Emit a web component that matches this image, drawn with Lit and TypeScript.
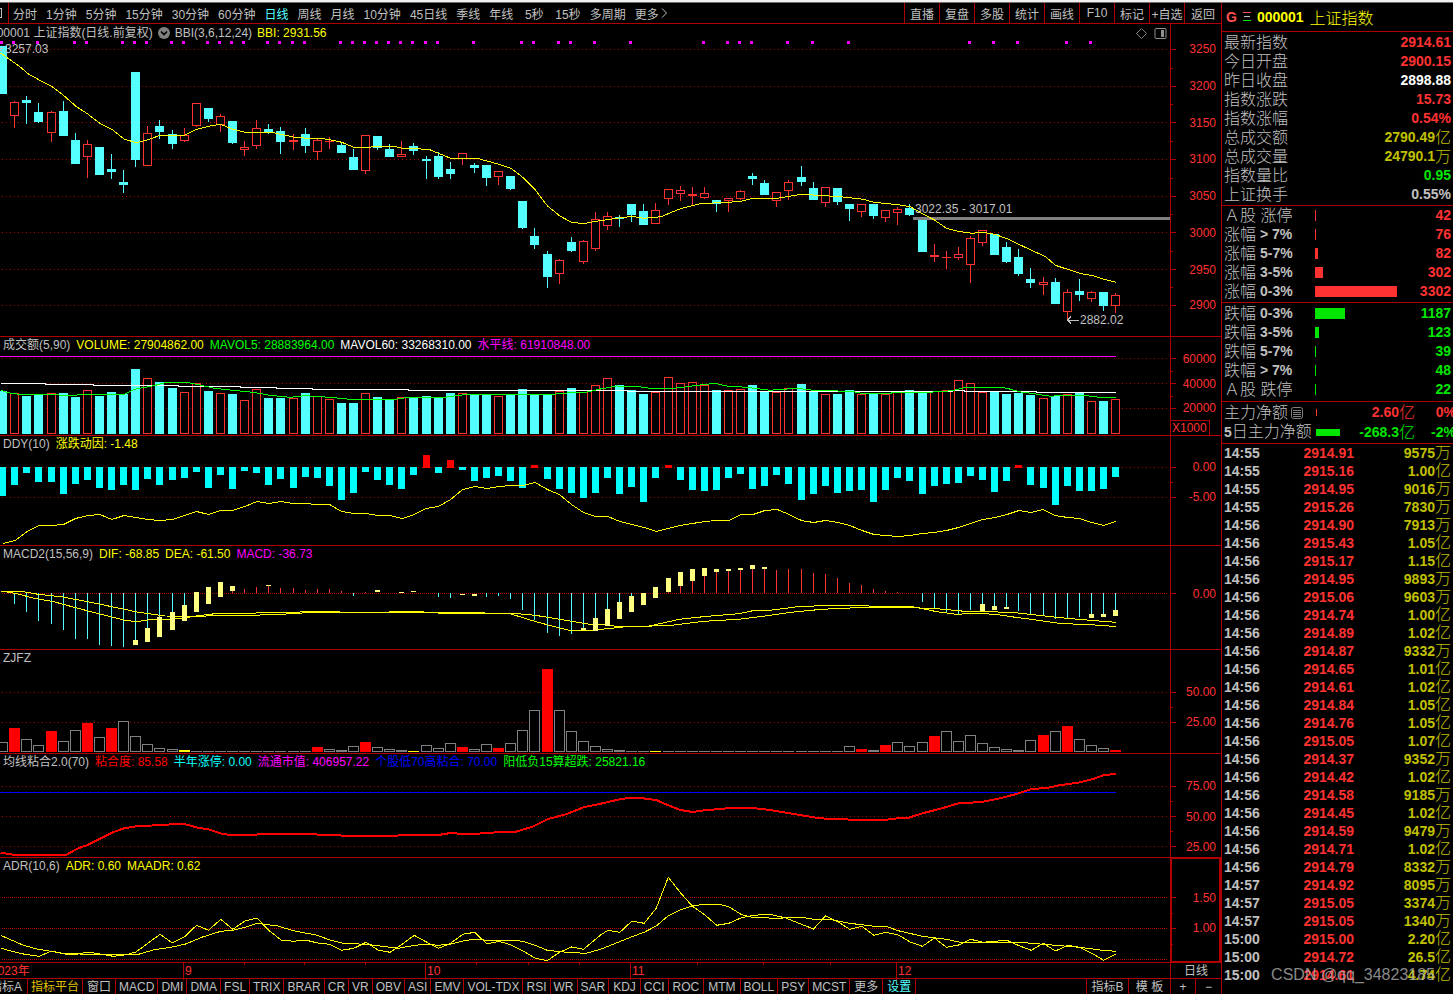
import { LitElement, html, svg, css, nothing, TemplateResult } from "lit";
import { customElement, property, state } from "lit/decorators.js";
import { classMap } from "lit/directives/class-map.js";
import { styleMap } from "lit/directives/style-map.js";

type Point = [number, number];
type Candle = [string, number, number, number, number];

interface Note { x: number; y: number; text: string; }
interface Series { text: string; tone: string; }
interface PanelSpec {
  name: string;
  top: number;
  height: number;
  series: Series[];
  grid: number[];
  dense?: boolean;
  labels: [number, string][];
  minor: number[];
  notes?: Note[];
  unit?: string;
  active?: boolean;
  draw: () => TemplateResult[];
}

const PLOT_WIDTH = 1170;
const STEP = 12.097;
const START = 2.68;
const slot = (i: number) => Math.floor(START + STEP * i);

/* kind, high, open/close top, open/close bottom, low */
const candles: Candle[] = [
  ["D", 46, 46, 94, 94], ["U", 101, 102, 116, 128], ["D", 96, 100, 103, 124], ["D", 103, 112, 122, 123],
  ["U", 111, 112, 133, 142], ["D", 101, 111, 136, 136], ["D", 133, 140, 164, 164], ["U", 140, 144, 157, 178],
  ["D", 147, 147, 175, 175], ["D", 154, 169, 172, 179], ["D", 170, 182, 185, 193], ["D", 72, 72, 160, 167],
  ["U", 126, 133, 166, 166], ["D", 120, 126, 132, 139], ["D", 130, 134, 144, 149], ["U", 128, 135, 141, 142],
  ["U", 103, 103, 126, 127], ["D", 108, 108, 119, 122], ["U", 114, 116, 125, 132], ["D", 121, 121, 143, 144],
  ["U", 141, 147, 150, 156], ["U", 120, 128, 146, 149], ["D", 124, 129, 132, 134], ["D", 127, 131, 142, 154],
  ["U", 134, 140, 142, 150], ["D", 128, 134, 146, 153], ["U", 138, 140, 152, 160], ["U", 137, 141, 142, 149],
  ["D", 142, 145, 153, 153], ["D", 149, 157, 170, 170], ["U", 135, 135, 171, 174], ["D", 136, 136, 148, 150],
  ["D", 144, 149, 157, 157], ["U", 141, 154, 157, 157], ["D", 143, 146, 151, 155], ["D", 156, 159, 161, 179],
  ["D", 152, 156, 177, 179], ["D", 162, 169, 174, 179], ["U", 153, 153, 159, 165], ["D", 163, 165, 168, 173],
  ["D", 165, 165, 178, 186], ["U", 171, 171, 177, 185], ["D", 176, 176, 189, 190], ["D", 201, 201, 228, 229],
  ["D", 228, 236, 245, 249], ["D", 251, 254, 277, 288], ["U", 259, 260, 274, 284], ["D", 237, 242, 251, 252],
  ["U", 240, 241, 262, 264], ["U", 212, 219, 249, 251], ["U", 212, 216, 226, 230], ["D", 215, 217, 219, 227],
  ["D", 204, 204, 215, 222], ["D", 204, 211, 225, 225], ["U", 203, 210, 224, 224], ["U", 189, 189, 199, 205],
  ["U", 186, 190, 194, 201], ["U", 187, 194, 196, 206], ["U", 187, 193, 198, 199], ["D", 200, 200, 204, 212],
  ["U", 198, 198, 201, 212], ["U", 190, 191, 199, 200], ["D", 173, 176, 179, 185], ["D", 180, 183, 195, 195],
  ["U", 192, 192, 201, 207], ["U", 180, 182, 191, 200], ["D", 166, 177, 182, 186], ["D", 182, 188, 200, 200],
  ["U", 187, 187, 203, 207], ["D", 188, 188, 202, 205], ["D", 204, 204, 209, 221], ["U", 204, 204, 212, 217],
  ["D", 204, 204, 216, 219], ["U", 210, 210, 218, 222], ["U", 207, 209, 213, 225], ["D", 204, 208, 215, 216],
  ["D", 220, 220, 252, 252], ["U", 244, 255, 257, 262], ["U", 251, 257, 258, 269], ["U", 247, 254, 258, 260],
  ["U", 236, 238, 265, 283], ["U", 230, 230, 243, 246], ["D", 234, 234, 255, 255], ["D", 242, 247, 262, 263],
  ["D", 249, 257, 274, 276], ["D", 268, 279, 283, 288], ["U", 277, 282, 285, 295], ["D", 278, 282, 304, 304],
  ["U", 289, 292, 312, 319], ["D", 279, 291, 295, 301], ["U", 291, 292, 299, 302], ["D", 292, 292, 306, 311],
  ["U", 293, 295, 306, 313],
];

const signals = [0, 1, 3, 6, 7, 10, 11, 12, 14, 15, 17, 18, 19, 20, 22, 23, 24, 25, 28, 29, 30, 31, 32, 33, 34, 35, 36, 39,
  43, 44, 46, 47, 49, 52, 58, 60, 61, 62, 65, 67, 70, 80, 82, 84, 88, 90];

const bbi: Point[] = [[-.2, 53], [1.4, 66.7], [2.1, 74], [3, 80], [4, 86.3], [5, 95.3], [6, 106], [7, 114], [8, 123.3],
  [9, 129.3], [10, 139], [11, 142.7], [12, 139.7], [13, 135.3], [15, 135.3], [16, 129.3], [17, 126.3], [18, 124.3],
  [19, 129.3], [20, 132.3], [22.2, 132.3], [24, 137], [25.1, 138.3], [26.2, 138.3], [27.3, 140.3], [28, 142.3],
  [29, 147.3], [30.2, 147.3], [31.2, 146], [32.3, 146], [33, 148.3], [35.2, 149.3], [37, 158.3], [39.2, 158.3],
  [41, 164.3], [42, 168.3], [43, 177.7], [44, 189.7], [45, 205.7], [46, 215.7], [47, 222.3], [48, 223.7], [49, 221.3],
  [50.5, 218.7], [52, 216.3], [53, 218.3], [54.4, 216.7], [55.2, 212.7], [56, 208.7], [57.8, 203.3], [59.6, 202.7],
  [61, 201.3], [62, 198.3], [64, 198.3], [66, 194.3], [69.2, 196.7], [71.1, 199.3], [72, 202.3], [74, 204.7],
  [75, 206.7], [76.1, 214.3], [77, 220], [78, 228.3], [79, 231.3], [80.1, 233.3], [81, 232.3], [82, 234.3],
  [83, 238.7], [84.1, 245], [85.1, 250.7], [86.2, 256.7], [87, 265.3], [88, 269.3], [89, 273.3], [90.2, 276],
  [91, 279.3], [92, 282.3]];

const volume = [391, 393, 396, 394, 393, 393, 397, 390, 396, 392, 394, 369, 378, 382, 388, 392, 383, 391, 393, 394, 400,
  389, 398, 398, 398, 393, 396, 399, 403, 403, 393, 397, 399, 397, 397, 396, 397, 393, 393, 395, 395, 396, 395, 389, 395,
  395, 391, 388, 392, 385, 378, 385, 390, 394, 392, 377, 383, 382, 385, 390, 390, 389, 385, 392, 392, 388, 384, 392, 394,
  394, 390, 394, 394, 394, 392, 390, 392, 391, 390, 380, 383, 392, 391, 394, 393, 395, 398, 396, 394, 393, 401, 401, 399];

const mavol60: Point[] = [[-.2, 383.5], [3.5, 383.5], [3.5, 384.5], [7.5, 384.5], [7.5, 385.5], [14.5, 385.5],
  [14.5, 386.5], [19.6, 386.5], [19.6, 387.5], [22.6, 387.5], [22.6, 388.5], [25.6, 388.5], [25.6, 389.5], [33.5, 389.5],
  [33.5, 390.5], [51.6, 390.5], [51.6, 391.5], [78.5, 391.5], [78.5, 390.5], [79.5, 390.5], [79.5, 391.5], [85.4, 391.5],
  [85.4, 392.5], [92, 392.5]];

const mavol5: Point[] = [[-.2, 390.5], [.7, 393.3], [1.4, 394.3], [3.7, 394.3], [5.6, 395.7], [6.6, 394.3], [10, 394.3],
  [10.9, 389.3], [12.6, 385.3], [13.4, 382.7], [15.3, 382.7], [16, 384.3], [17.5, 388.3], [19, 390.3], [20.7, 392.3],
  [21.9, 395], [23.7, 397.3], [25, 395.7], [27, 397.3], [28.7, 399.3], [32.4, 399.3], [33.6, 397.3], [36.5, 397.3],
  [38.4, 394.3], [45.4, 394.3], [47.3, 392.3], [48.2, 392.3], [49.4, 389], [50.7, 386], [52.3, 386.3], [53.5, 388.3],
  [55.4, 388.3], [56.4, 387], [57.6, 385], [58.9, 383.3], [59.8, 386], [61.5, 387.3], [63.4, 390.3], [64.4, 389.3],
  [65.7, 388.3], [67, 390.3], [68.5, 390.7], [70.3, 391.7], [71, 393.3], [73.4, 393.3], [73.6, 392.3], [76.5, 392.3],
  [78.5, 390.7], [79.5, 387.7], [80.4, 387.3], [82.4, 387.3], [83, 388.3], [84, 391.7], [85, 393.3], [86.6, 396.3],
  [87.6, 395.3], [89.3, 395.3], [90.6, 397.3], [92, 397.3]];

const ddyZero = 467;
const ddyBars = [496, 485, 473, 482, 482, 494, 484, 480, 488, 490, 485, 490, 479, 485, 480, 478, 472, 488, 475, 489, 471,
  473, 485, 479, 488, 477, 478, 486, 500, 493, 472, 480, 485, 489, 475, 455, 473, 460, 470, 481, 478, 476, 481, 488, 465,
  479, 489, 493, 498, 493, 478, 494, 487, 502, 478, 465, 480, 490, 491, 490, 478, 474, 489, 486, 475, 484, 500, 494, 486,
  493, 491, 490, 502, 490, 478, 481, 494, 486, 484, 483, 476, 480, 492, 481, 465, 485, 488, 505, 486, 491, 491, 489, 477];

const ddyLine = [543, 540, 531, 525, 525, 524, 518, 515, 514, 519, 515, 517, 519, 520, 519, 515, 511, 514, 510, 510, 506,
  501, 503, 501, 503, 503, 504, 504, 511, 513, 513, 515, 515, 518, 514, 508, 506, 499, 489, 486, 488, 486, 485, 485, 482,
  489, 494, 504, 512, 516, 516, 521, 524, 527, 531, 528, 525, 523, 521, 520, 520, 514, 514, 510, 509, 514, 520, 522, 520,
  522, 525, 530, 534, 535, 536, 535, 533, 532, 530, 527, 523, 519, 517, 514, 510, 512, 509, 515, 517, 518, 522, 525, 521];

const macdZero = 593;
const macdSticks: Record<number, number> = {
  1: 604, 2: 612, 3: 621, 4: 624, 5: 630, 6: 639, 7: 639, 8: 645, 9: 646, 10: 647, 11: 640, 12: 628, 13: 617, 14: 612,
  15: 605, 19: 591, 20: 589, 21: 587, 22: 586, 23: 588, 24: 588, 25: 590, 26: 589, 27: 589, 28: 591, 29: 596, 30: 592,
  36: 597, 37: 598, 40: 597, 41: 596, 42: 599, 43: 610, 44: 620, 45: 633, 46: 636, 47: 634, 48: 628, 49: 618, 50: 609,
  51: 602, 52: 596, 55: 592, 56: 586, 57: 581, 58: 576, 59: 572, 60: 571, 61: 570, 62: 569, 63: 569, 64: 570, 65: 569,
  66: 569, 67: 573, 68: 574, 69: 578, 70: 583, 71: 585, 72: 589, 73: 591, 74: 592, 76: 602, 77: 608, 78: 612, 79: 614,
  80: 610, 81: 604, 82: 606, 83: 607, 84: 611, 85: 614, 86: 615, 87: 619, 88: 618, 89: 617, 90: 614, 91: 614, 92: 610,
};
const macdBlocks: [number, number, number][] = [
  [11, 640, 645], [12, 628, 642], [13, 617, 637], [14, 612, 630], [15, 605, 621], [16, 592, 612], [17, 587, 604],
  [18, 582, 597], [19, 586, 591], [22, 585, 586], [31, 590, 592], [33, 592, 593], [34, 591, 592], [38, 594, 595],
  [39, 594, 596], [48, 628, 630], [49, 618, 631], [50, 609, 626], [51, 602, 619], [52, 596, 612], [53, 593, 605],
  [54, 587, 598], [55, 578, 592], [56, 572, 586], [57, 569, 581], [58, 568, 576], [59, 569, 572], [60, 569, 571],
  [61, 568, 570], [62, 565, 569], [63, 567, 569], [81, 604, 611], [82, 606, 610], [83, 607, 609], [90, 614, 618],
  [91, 614, 617], [92, 610, 616],
];
const dif: Point[] = [[-.2, 591], [1, 593.3], [2.5, 598], [4.2, 601.7], [6.1, 608], [8, 614], [10, 620], [11, 621.7],
  [12, 620], [14, 619], [15, 618], [16, 616], [18, 613], [20, 614], [21.6, 612.3], [23.5, 612.3], [27, 611.3],
  [29, 613], [34, 611.3], [36, 613], [39.6, 613], [42, 614], [44, 621.5], [46, 628], [47, 630.7], [48.2, 630.7],
  [49.4, 629.3], [51.3, 627], [53.3, 626.3], [54.3, 623.7], [55.9, 619.3], [58.2, 616.3], [60.8, 613.7], [62, 610.7],
  [63.4, 610.3], [65.7, 606.7], [67.7, 605.7], [71.4, 605.7], [72, 606.7], [75.2, 606.7], [77.2, 611.7], [78.8, 614.3],
  [80.4, 613.3], [82, 614.3], [83.7, 617.3], [85.6, 620.3], [87.3, 623.3], [88.9, 624.3], [90.9, 625.3], [92, 626.7]];
const dea: Point[] = [[-.2, 591], [1.7, 591.7], [2.9, 594.3], [4.8, 596.7], [6.7, 601], [9, 606.7], [11.2, 612.3],
  [13.4, 616], [16.2, 616.3], [18.1, 615.3], [20.4, 615.3], [23.2, 614.3], [23.8, 613.3], [27, 612.3], [34, 612.3],
  [42.2, 613.3], [44, 615.3], [46, 619.3], [48.5, 624.3], [49.4, 624.3], [50.7, 626.3], [53, 626.3], [55.3, 625.3],
  [57.9, 621.3], [60.8, 619.3], [62.8, 616.3], [65.1, 612.3], [67.7, 609.3], [70.6, 607.7], [75.2, 607.7],
  [77.2, 608.7], [79.5, 611.3], [83.4, 612.3], [85.6, 615.3], [87.9, 618.3], [89.9, 620.3], [92, 622.3]];

const zjfz = [742, 728, 739, 745, 731, 741, 730, 723, 737, 728, 721, 736, 744, 748, 749, 750, 751, 751, 751, 751, 751, 751,
  751, 751, 751, 751, 747, 749, 750, 746, 742, 747, 749, 750, 751, 745, 748, 743, 747, 749, 744, 748, 743, 730, 710, 669,
  710, 731, 741, 746, 749, 750, 751, 751, 751, 751, 751, 751, 751, 751, 751, 751, 751, 751, 751, 751, 751, 751, 751, 751,
  746, 749, 750, 745, 742, 746, 742, 736, 731, 741, 735, 743, 747, 749, 750, 740, 735, 731, 726, 739, 745, 748, 750];
const zjfzHot = new Set([1, 4, 7, 9, 26, 30, 38, 41, 45, 71, 73, 77, 86, 88, 92]);
const zjfzLow = new Set([15, 34, 54]);

const cohesion: Point[] = [[-.2, 852.7], [1, 855], [5.2, 855], [6.1, 849], [7.1, 844.3], [9, 832.7], [10, 828.3],
  [11.2, 826], [13.4, 825], [14, 824], [15.1, 824.3], [16.1, 827.7], [17, 829.3], [18.1, 833.7], [18.8, 835],
  [20.7, 835], [21.3, 834], [24.9, 834], [27, 835], [28.9, 836], [32, 836], [33.3, 835], [36, 835], [37, 833],
  [38, 834], [40, 833.3], [41, 832], [42.3, 832], [43.8, 826.7], [45, 819.3], [46.6, 814], [48, 807.3], [49.4, 803.7],
  [51.2, 798.7], [52.5, 797.7], [54, 800], [55, 805.3], [56, 810], [57, 812], [58, 810.3], [60.2, 808], [62, 808],
  [63.4, 810], [65.4, 814], [67, 817.3], [68.2, 819], [69.6, 819], [70.1, 820], [72.9, 820], [73.6, 818.7],
  [74.9, 817.7], [76, 813.3], [77.5, 808.7], [79, 803.3], [80.9, 802], [82.4, 798.3], [84, 793.3], [85, 789],
  [86.3, 788], [87.3, 785.3], [88.9, 782.7], [90.2, 778.7], [91, 775], [92, 774]];

const adr: Point[] = [[-.2, 947.7], [.3, 950], [1.7, 954], [3, 956.3], [4, 951], [5.2, 954.3], [6.1, 954.3], [7, 952],
  [8.2, 954.3], [9.1, 956.3], [10.2, 954.7], [11, 952], [12, 943], [13, 934.3], [14, 943], [15, 937], [16, 925.3],
  [17, 930.3], [18, 919.3], [19, 929.3], [20, 921], [21, 918], [22, 930.7], [23, 940], [24, 941.3], [25, 940],
  [26, 943], [27, 944.3], [28, 950.3], [29, 948.3], [30, 942.3], [31, 950], [32, 952.3], [33, 944.3], [34, 935.3],
  [35, 942], [36, 948.3], [37, 943.3], [38, 934.3], [39, 932.3], [40, 944], [41, 941.3], [42, 945], [43, 951],
  [44, 958.3], [45, 960.7], [46, 952.3], [47, 947], [48, 949.3], [49.4, 935], [50, 930.3], [51, 932.3], [52, 921],
  [53, 923.3], [54, 908.3], [55, 877.3], [56, 892.7], [57, 906.3], [58, 914.7], [59, 925.3], [60, 923.3], [61, 918],
  [62, 915.3], [63.4, 914.3], [64.7, 918], [67, 929], [68, 915.7], [69, 921.7], [70, 929.3], [71, 926.3], [72, 935.3],
  [73, 932.3], [74, 935], [75, 942], [76, 946.3], [77, 938], [78, 947.3], [79, 945], [80, 939.3], [81, 942.3],
  [83, 940.3], [84, 945.7], [85, 950.3], [86, 943.3], [87, 951], [88, 945.3], [89, 947.3], [90, 953.3], [91, 960.3],
  [92, 954]];
const maadr: Point[] = [[-.2, 935.3], [1.7, 945.3], [2.8, 949], [4.8, 953], [7.4, 954.7], [11.2, 954.3], [12.4, 950],
  [14, 947], [15.1, 944], [16.5, 937], [18, 931.3], [19.1, 930], [20.2, 926.7], [21, 923.3], [22.7, 926], [24, 930.7],
  [26, 935.3], [27, 940], [28.1, 943.3], [30, 944.3], [32.7, 948.3], [34, 945.3], [35, 944.3], [36, 945.3], [37, 944],
  [38, 941], [39, 939], [40, 940.3], [42, 940.3], [43, 941.3], [44, 945.3], [45, 950.3], [46.6, 952.3], [48.2, 953.3],
  [49.4, 949.3], [52, 936.7], [53, 932.3], [54, 926], [55, 915.7], [56, 909.7], [57, 906], [57.7, 904.7],
  [59.2, 904.3], [60, 906.7], [61, 914.3], [61.8, 917], [63.8, 918.3], [66, 917.3], [67, 919.3], [68.3, 919.3],
  [70, 923.3], [72, 926.3], [73, 926.3], [74, 930.7], [76, 936.3], [78, 939.3], [79.1, 942.3], [84, 942.3],
  [86, 944.3], [89, 947.3], [90.9, 950.3], [92, 951.3]];

const lineOf = (points: Point[], tone: string, width = 1) => svg`<polyline class=${"line " + tone} stroke-width=${width}
  points=${points.map(([i, y]) => `${(START + 0.3 + STEP * i).toFixed(1)},${y}`).join(" ")}></polyline>`;

const block = (x: number, y: number, w: number, h: number, tone: string) =>
  svg`<rect class=${"fill " + tone} x=${x} y=${y} width=${w} height=${h}></rect>`;

const hollow = (x: number, y: number, w: number, h: number, tone: string) =>
  svg`<rect class=${"hollow " + tone} x=${x + 0.5} y=${y + 0.5} width=${w - 1} height=${Math.max(h - 1, 0.1)}></rect>`;

const drawCandles = () => candles.map(([kind, high, top, bottom, low], i) => {
  const x = slot(i);
  const tone = kind === "U" ? "rise" : "fall";
  const body = kind === "D" || bottom - top < 3
    ? block(x - 4, top, 9, bottom - top, tone)
    : hollow(x - 4, top, 9, bottom - top, tone);
  return svg`${high < top ? block(x, high, 1, top - high, tone) : nothing}
    ${low > bottom ? block(x, bottom, 1, low - bottom, tone) : nothing}${body}`;
});

const panels: PanelSpec[] = [
  {
    name: "000001 上证指数(日线.前复权)", top: 24, height: 312,
    series: [{ text: "BBI(3,6,12,24)", tone: "plain" }, { text: "BBI: 2931.56", tone: "yellow" }],
    grid: [49, 86, 122, 159, 196, 232, 269, 305],
    labels: [[49, "3250"], [86, "3200"], [122, "3150"], [159, "3100"], [196, "3050"], [232, "3000"], [269, "2950"], [305, "2900"]],
    minor: [68, 104, 141, 178, 214, 251, 287],
    notes: [{ x: 5, y: 49, text: "3257.03" }, { x: 915, y: 209, text: "3022.35 - 3017.01" }, { x: 1080, y: 320, text: "2882.02" }],
    draw: () => [
      ...signals.map((i) => block(slot(i) - 2, 41, 3, 3, "magenta")),
      svg`${drawCandles()}`,
      block(913, 217, 257, 3, "grey"),
      lineOf(bbi, "yellow"),
      svg`<path class="line plain" d="M1067 320.5H1079M1071 316.5L1067.5 320L1071 323.5"></path>`,
      svg`<path class="line plain" d="M-1 48.5H3M0 50.5H2"></path>`,
    ],
  },
  {
    name: "成交额(5,90)", top: 337, height: 98,
    series: [{ text: "VOLUME: 27904862.00", tone: "yellow" }, { text: "MAVOL5: 28883964.00", tone: "green" },
      { text: "MAVOL60: 33268310.00", tone: "white" }, { text: "水平线: 61910848.00", tone: "magenta" }],
    grid: [358, 383, 408],
    labels: [[358, "60000"], [383, "40000"], [408, "20000"]], minor: [371, 396], unit: "X1000",
    draw: () => [
      ...volume.map((y, i) => candles[i][0] === "D"
        ? block(slot(i) - 4, y, 9, 434 - y, "fall") : hollow(slot(i) - 4, y, 9, 434 - y, "rise")),
      lineOf([[-.3, 356.5], [92, 356.5]], "magenta"), lineOf(mavol60, "white"), lineOf(mavol5, "green"),
    ],
  },
  {
    name: "DDY(10)", top: 436, height: 109, series: [{ text: "涨跌动因: -1.48", tone: "yellow" }],
    grid: [467, 497], labels: [[467, "0.00"], [497, "-5.00"]], minor: [482],
    draw: () => [
      ...ddyBars.map((y, i) => y < ddyZero
        ? block(slot(i) - 3, y, 7, ddyZero + 1 - y, "red") : block(slot(i) - 3, ddyZero, 7, y - ddyZero, "aqua")),
      lineOf(ddyLine.map((y, i): Point => [i, y + 0.5]), "yellow"),
    ],
  },
  {
    name: "MACD2(15,56,9)", top: 546, height: 103, dense: true,
    series: [{ text: "DIF: -68.85", tone: "yellow" }, { text: "DEA: -61.50", tone: "yellow" }, { text: "MACD: -36.73", tone: "magenta" }],
    grid: [593], labels: [[593, "0.00"]], minor: [],
    draw: () => [
      ...Object.entries(macdSticks).map(([k, y]) => y > macdZero
        ? block(slot(+k), macdZero, 1, y - macdZero, "fall") : block(slot(+k), y, 1, macdZero - y, "rise")),
      lineOf(dif, "yellow"), lineOf(dea, "yellow"),
      ...macdBlocks.map(([i, a, b]) => block(slot(i) - 2, a, 5, b - a, "cream")),
    ],
  },
  {
    name: "ZJFZ", top: 650, height: 103, series: [], grid: [692, 722],
    labels: [[692, "50.00"], [722, "25.00"]], minor: [707],
    draw: () => zjfz.map((y, i) => {
      const x = slot(i) - 5;
      if (zjfzHot.has(i)) return block(x, y, 11, 752 - y, "red");
      if (zjfzLow.has(i)) return block(x, y, 11, 752 - y, "yellow");
      return y > 749 ? block(x, y, 11, 752 - y, "grey") : hollow(x, y, 11, 752 - y, "grey");
    }),
  },
  {
    name: "均线粘合2.0(70)", top: 754, height: 103,
    series: [{ text: "粘合度: 85.58", tone: "red" }, { text: "半年涨停: 0.00", tone: "aqua" }, { text: "流通市值: 406957.22", tone: "magenta" },
      { text: "个股低70高粘合: 70.00", tone: "blue" }, { text: "阳低负15算超跌: 25821.16", tone: "green" }],
    grid: [786, 816, 846], labels: [[786, "75.00"], [816, "50.00"], [846, "25.00"]], minor: [801, 831],
    draw: () => [lineOf([[-.3, 792.5], [92, 792.5]], "blue"), lineOf(cohesion, "red", 2)],
  },
  {
    name: "ADR(10,6)", top: 858, height: 104, dense: true, active: true,
    series: [{ text: "ADR: 0.60", tone: "yellow" }, { text: "MAADR: 0.62", tone: "yellow" }],
    grid: [897, 928, 959], labels: [[897, "1.50"], [928, "1.00"]], minor: [913, 944],
    draw: () => [lineOf(adr, "yellow"), lineOf(maadr, "yellow")],
  },
];

@customElement("chart-panel")
class ChartPanel extends LitElement {
  @property({ attribute: false }) spec!: PanelSpec;
  @property({ type: Boolean }) main = false;

  static styles = css`
    :host { display: grid; grid-template-columns: minmax(0, 1fr) 51px; min-height: 0; border-bottom: 1px solid #b00000; box-sizing: border-box; }
    .plot, .axis { position: relative; overflow: hidden; }
    .axis { border-left: 1px solid #b00000; }
    .axis.active { overflow: visible; }
    .axis.active::after { content: ""; position: absolute; inset: -1px 0 -1px -1px; border: 2px solid #b00000; }
    .canvas { position: absolute; inset: 0; width: 100%; height: 100%; shape-rendering: crispEdges; }
    .head { position: relative; display: flex; gap: 6px; padding: 0 3px; line-height: 16px; white-space: pre; color: #c0c0c0; }
    .head.main { line-height: 18px; padding-left: 0; gap: 5px; }
    .title { font: inherit; margin: 0; }
    .head.main .title { margin-left: -10px; }
    .chevron { width: 12px; height: 12px; align-self: center; }
    .tools { display: flex; gap: 6px; align-items: center; margin-left: auto; }
    .tools svg { width: 13px; height: 13px; display: block; }
    .note, .tick { position: absolute; line-height: 14px; margin-top: -7px; white-space: pre; color: #c0c0c0; }
    .tick { right: 5px; color: #ff3232; }
    .unit { position: absolute; left: 0; bottom: 0; width: 39px; height: 15px; border: solid #b00000; border-width: 1px 1px 0 0; line-height: 14px; padding-left: 1px; box-sizing: border-box; color: #ff3232; }
    .grid { stroke: #b00000; stroke-dasharray: 1 3; }
    .grid.dense { stroke-dasharray: 1 1; }
    .mark { stroke: #b00000; }
    .line { fill: none; stroke: currentColor; }
    .fill { fill: currentColor; }
    .hollow { fill: #000; stroke: currentColor; }
    .rise { color: #ff3232; }
    .fall { color: #54ffff; }
    .plain { color: #c0c0c0; }
    .yellow { color: #ffff00; }
    .green { color: #00ff00; }
    .white { color: #ffffff; }
    .magenta { color: #ff00ff; }
    .aqua { color: #00ffff; }
    .red { color: #ff0000; }
    .blue { color: #0000ff; }
    .grey { color: #808080; }
    .cream { color: #ffff80; }
  `;

  private place(y: number) {
    return `${(((y + 0.5 - this.spec.top) / this.spec.height) * 100).toFixed(3)}%`;
  }

  render() {
    const s = this.spec;
    return html`
      <section class="plot">
        <svg class="canvas" viewBox="0 ${s.top} ${PLOT_WIDTH} ${s.height}" preserveAspectRatio="none" aria-hidden="true">
          ${s.grid.map((y) => svg`<line class=${s.dense ? "grid dense" : "grid"} x1="2" x2="1168" y1=${y + 0.5} y2=${y + 0.5}></line>`)}
          ${s.draw()}
        </svg>
        <header class=${classMap({ head: true, main: this.main })}>
          <h2 class="title">${s.name}</h2>
          ${this.main ? html`<svg class="chevron" viewBox="0 0 12 12" aria-hidden="true"><circle cx="6" cy="6" r="6" fill="#808080"></circle><path d="M3 4.5L6 7.5L9 4.5" fill="none" stroke="#000" stroke-width="1.6"></path></svg>` : nothing}
          ${s.series.map((v) => html`<span class=${v.tone}>${v.text}</span>`)}
          ${this.main ? html`<span class="tools">
            <svg viewBox="0 0 13 13" aria-hidden="true"><path d="M6.5 1.5L11.5 6.5L6.5 11.5L1.5 6.5Z" fill="none" stroke="#808080"></path></svg>
            <svg viewBox="0 0 13 13" aria-hidden="true"><rect x="1" y="1.5" width="11" height="10" rx="1" fill="none" stroke="#909090"></rect><rect x="7" y="3" width="3" height="7" fill="#909090"></rect></svg>
          </span>` : nothing}
        </header>
        ${(s.notes ?? []).map((n) => html`<span class="note" style=${styleMap({ left: `${(n.x / PLOT_WIDTH) * 100}%`, top: this.place(n.y) })}>${n.text}</span>`)}
      </section>
      <aside class=${classMap({ axis: true, active: !!s.active })}>
        <svg class="canvas" viewBox="0 ${s.top} 50 ${s.height}" preserveAspectRatio="none" aria-hidden="true">
          ${s.labels.map(([y]) => svg`<line class="mark" x1="0" x2="5" y1=${y + 0.5} y2=${y + 0.5}></line>`)}
          ${s.minor.map((y) => svg`<line class="mark" x1="0" x2="2" y1=${y + 0.5} y2=${y + 0.5}></line>`)}
        </svg>
        ${s.labels.map(([y, text]) => html`<span class="tick" style=${styleMap({ top: this.place(y) })}>${text}</span>`)}
        ${s.unit ? html`<span class="unit">${s.unit}</span>` : nothing}
      </aside>`;
  }
}

const summary = [
  ["最新指数", "2914.61", "", "rise"], ["今日开盘", "2900.15", "", "rise"], ["昨日收盘", "2898.88", "", "white"],
  ["指数涨跌", "15.73", "", "rise"], ["指数涨幅", "0.54%", "", "rise"], ["总成交额", "2790.49", "亿", "gold"],
  ["总成交量", "24790.1", "万", "gold"], ["指数量比", "0.95", "", "drop"], ["上证换手", "0.55%", "", "plain"],
];
const gainers: [string, string, number, string][] = [
  ["Ａ股 涨停", "", 1, "42"], ["涨幅", "> 7%", 1, "76"], ["涨幅", "5-7%", 3, "82"], ["涨幅", "3-5%", 8, "302"], ["涨幅", "0-3%", 82, "3302"],
];
const losers: [string, string, number, string][] = [
  ["跌幅", "0-3%", 30, "1187"], ["跌幅", "3-5%", 4, "123"], ["跌幅", "5-7%", 1, "39"], ["跌幅", "> 7%", 1, "48"], ["Ａ股 跌停", "", 1, "22"],
];
const trades = `14:55 2914.91 9575万|14:55 2915.16 1.00亿|14:55 2914.95 9016万|14:55 2915.26 7830万|14:56 2914.90 7913万|14:56 2915.43 1.05亿|14:56 2915.17 1.15亿|14:56 2914.95 9893万|14:56 2915.06 9603万|14:56 2914.74 1.00亿|14:56 2914.89 1.02亿|14:56 2914.87 9332万|14:56 2914.65 1.01亿|14:56 2914.61 1.02亿|14:56 2914.84 1.05亿|14:56 2914.76 1.05亿|14:56 2915.05 1.07亿|14:56 2914.37 9352万|14:56 2914.42 1.02亿|14:56 2914.58 9185万|14:56 2914.45 1.02亿|14:56 2914.59 9479万|14:56 2914.71 1.02亿|14:56 2914.79 8332万|14:57 2914.92 8095万|14:57 2915.05 3374万|14:57 2915.05 1340万|15:00 2915.00 2.20亿|15:00 2914.72 26.5亿|15:00 2914.61 4.74亿`
  .split("|").map((row) => row.split(" "));

@customElement("quote-board")
class QuoteBoard extends LitElement {
  static styles = css`
    :host { display: block; position: relative; border-left: 1px solid #b00000; color: #c0c0c0; font-size: 14px; font-weight: bold; overflow: hidden; }
    .name { display: flex; align-items: center; gap: 6px; height: 28px; padding-left: 4px; border-bottom: 1px solid #b00000; color: #ffff00; }
    .flag { color: #ff5050; }
    .bars { width: 8px; height: 12px; flex: none; }
    .name h1 { margin: 0; font-size: 14px; }
    .cjk { font-size: 16px; font-weight: 300; }
    .list { margin: 0; border-bottom: 1px solid #b00000; }
    .list.top { padding: 1px 0; }
    .list.level { padding-bottom: 1px; }
    .list.losers, .list.flow { padding: 1px 0 2px; }
    .row { display: flex; align-items: center; height: 19px; line-height: 19px; padding: 0 2px; white-space: pre; }
    .level .row { display: grid; grid-template-columns: 91px 1fr auto; }
    .flow .row { display: grid; grid-template-columns: 92px 1fr 38px; padding-right: 0; }
    dt, dd { margin: 0; }
    dt { display: flex; align-items: center; gap: 4px; }
    .flow dt { gap: 3px; white-space: pre; }
    .top dd { margin-left: auto; }
    .bar { height: 11px; background: currentColor; }
    .thin { height: 7px; background: currentColor; }
    .amount { display: flex; align-items: center; }
    .amount .figure { margin-left: auto; }
    .share { text-align: right; margin-right: -3px; }
    .note-icon { width: 12px; height: 12px; }
    .rise { color: #ff3232; }
    .drop { color: #00e600; }
    .gold { color: #c0c000; }
    .white { color: #ffffff; }
    table { width: 100%; border-collapse: collapse; table-layout: fixed; }
    td { padding: 0; height: 18px; line-height: 18px; white-space: nowrap; }
    .time { width: 62px; padding-left: 2px; }
    .price { width: 68px; text-align: right; }
    .lot { text-align: right; padding-right: 2px; }
    .cell { display: flex; align-items: center; justify-content: flex-end; height: 18px; }
    .watermark { position: absolute; right: 18px; bottom: 9px; margin: 0; font-size: 16px; line-height: 20px; font-weight: normal; color: rgba(176, 176, 176, 0.8); }
  `;

  private level(rows: [string, string, number, string][], tone: string, falling = false) {
    return html`<dl class=${classMap({ list: true, level: true, losers: falling })}>${rows.map(([a, b, w, n]) => html`<div class="row">
      <dt><span class="cjk">${a}</span>${b ? html`<span>${b}</span>` : nothing}</dt>
      <dd class=${tone}><div class="bar" style=${styleMap({ width: `${w}px` })}></div></dd>
      <dd class=${tone}>${n}</dd></div>`)}</dl>`;
  }

  render() {
    return html`
      <header class="name"><span class="flag">G</span>
        <svg class="bars" viewBox="0 0 8 12" aria-hidden="true"><path d="M0 1.5H8" stroke="#ff5050"></path><path d="M1 5.5H7" stroke="#c0c0c0"></path><path d="M0 9.5H8" stroke="#00e600"></path></svg>
        <h1>000001</h1><span class="cjk">上证指数</span></header>
      <dl class="list top">${summary.map(([label, value, unit, tone]) => html`<div class="row">
        <dt class="cjk">${label}</dt><dd class=${tone}>${value}</dd>${unit ? html`<span class=${"cjk " + tone}>${unit}</span>` : nothing}</div>`)}</dl>
      ${this.level(gainers, "rise")}
      ${this.level(losers, "drop", true)}
      <dl class="list flow">
        <div class="row"><dt><span class="cjk">主力净额</span>
          <svg class="note-icon" viewBox="0 0 12 12" aria-hidden="true"><rect x=".5" y=".5" width="11" height="11" rx="2" fill="none" stroke="#808080"></rect><path d="M2 3.5H10M2 5.5H10M2 7.5H10M2 9.5H10" stroke="#808080"></path></svg></dt>
          <dd class="amount rise"><div class="thin" style=${styleMap({ width: "1px" })}></div><span class="figure">2.60</span><span class="cjk">亿</span></dd>
          <dd class="share rise">0%</dd></div>
        <div class="row"><dt><span>5<span class="cjk">日主力净额</span></span></dt>
          <dd class="amount drop"><div class="thin" style=${styleMap({ width: "24px" })}></div><span class="figure">-268.3</span><span class="cjk">亿</span></dd>
          <dd class="share drop">-2%</dd></div>
      </dl>
      <table><tbody>${trades.map(([time, price, lot]) => html`<tr>
        <td class="time">${time}</td><td class="price rise">${price}</td>
        <td class="lot gold"><div class="cell">${lot.slice(0, -1)}<span class="cjk">${lot.slice(-1)}</span></div></td></tr>`)}</tbody></table>
      <p class="watermark">CSDN @qq_34823185</p>`;
  }
}

const periods = ["分时", "1分钟", "5分钟", "15分钟", "30分钟", "60分钟", "日线", "周线", "月线", "10分钟", "45日线", "季线", "年线", "5秒", "15秒", "多周期", "更多"];
const actions = ["直播", "复盘", "多股", "统计", "画线", "F10", "标记", "+自选", "返回"];
const indicators = ["指标平台", "窗口", "MACD", "DMI", "DMA", "FSL", "TRIX", "BRAR", "CR", "VR", "OBV", "ASI", "EMV", "VOL-TDX", "RSI",
  "WR", "SAR", "KDJ", "CCI", "ROC", "MTM", "BOLL", "PSY", "MCST", "更多", "设置"];
const roomy = new Set(["窗口", "KDJ", "ROC", "MTM", "更多", "设置"]);
const months: [number, string][] = [[183, "9"], [425, "10"], [630, "11"], [896, "12"]];
const weeks = [244, 304, 365, 476, 528, 579, 697, 763, 830];
const along = (x: number) => `${((x / PLOT_WIDTH) * 100).toFixed(3)}%`;

@customElement("app-root")
class AppRoot extends LitElement {
  @state() private period = "日线";

  static styles = css`
    :host { display: block; background: #000; color: #c0c0c0; font: 12px "Liberation Sans", "Noto Sans CJK SC", sans-serif; overflow: hidden; }
    .frame { display: grid; grid-template-columns: minmax(0, 1fr) 232px; min-height: 100vh; box-sizing: border-box; border-top: 2px solid #f0f0f0; padding-top: 1px; box-shadow: inset 0 1px #707070; }
    .left { display: grid; min-width: 0; grid-template-rows: 21px 313fr 99fr 110fr 104fr 104fr 104fr 105fr 16px 15px; }
    button { appearance: none; background: none; border: 0; margin: 0; padding: 0; color: inherit; font: inherit; white-space: nowrap; cursor: pointer; }
    .top { display: flex; align-items: stretch; border-bottom: 1px solid #b00000; min-width: 0; }
    .stub { width: 8px; border-right: 1px solid #b00000; display: flex; align-items: center; }
    .stub i { width: 2px; height: 10px; border: 1px solid #c0c0c0; border-left: 0; box-sizing: border-box; }
    .periods { display: flex; gap: 9px; padding-left: 4px; flex: 1; min-width: 0; overflow: hidden; }
    .periods button { min-width: 24px; display: flex; align-items: center; justify-content: center; gap: 2px; }
    .periods .on { color: #54ffff; }
    .more { width: 6px; height: 10px; }
    .actions { display: flex; }
    .actions button { width: 35px; border-left: 1px solid #b00000; box-sizing: border-box; }
    .actions button:last-child { width: 37px; }
    .time { display: grid; grid-template-columns: minmax(0, 1fr) 51px; border-bottom: 1px solid #b00000; line-height: 17px; height: 15px; }
    .scale { position: relative; overflow: hidden; color: #ff3232; }
    .year { margin-left: -9px; }
    .month { position: absolute; top: 0; bottom: 0; border-left: 1px solid #b00000; padding-left: 1px; }
    .week { position: absolute; top: 0; width: 1px; height: 2px; background: #b00000; }
    .cycle { border-left: 1px solid #b00000; text-align: center; }
    .tabs { display: flex; overflow: hidden; min-width: 0; }
    .tabs button { flex: none; padding: 1px 3px 0; border-right: 1px solid #b00000; box-sizing: border-box; line-height: 14px; }
    .tabs .roomy { padding: 1px 4px 0; }
    .tabs .first { width: 28px; display: flex; justify-content: flex-end; padding: 1px 5px 0 0; overflow: hidden; }
    .tabs .platform { color: #e0c000; }
    .tabs .setup { color: #54ffff; }
    .tabs .gap { flex: 1; border-right: 1px solid #b00000; }
    .tabs .wide { width: 42px; padding: 1px 0 0; }
    .tabs .key { width: 25px; padding: 0; }
    .tabs .key:last-child { border-right: 0; }
  `;

  render() {
    return html`<div class="frame">
      <main class="left">
        <div class="top">
          <span class="stub"><i></i></span>
          <nav class="periods" aria-label="周期">${periods.map((p) => html`<button class=${classMap({ on: p === this.period })}
            @click=${() => (this.period = p)}>${p}${p === "更多" ? html`<svg class="more" viewBox="0 0 6 10" aria-hidden="true"><path d="M1 .5L5.500 5L1 9.500" fill="none" stroke="currentColor"></path></svg>` : nothing}</button>`)}</nav>
          <nav class="actions" aria-label="工具">${actions.map((a) => html`<button>${a}</button>`)}</nav>
        </div>
        ${panels.map((p, i) => html`<chart-panel .spec=${p} ?main=${i === 0}></chart-panel>`)}
        <div class="time">
          <div class="scale"><span class="year">2023年</span>
            ${months.map(([x, m]) => html`<span class="month" style=${styleMap({ left: along(x) })}>${m}</span>`)}
            ${weeks.map((x) => html`<i class="week" style=${styleMap({ left: along(x) })}></i>`)}
          </div>
          <span class="cycle">日线</span>
        </div>
        <nav class="tabs" aria-label="指标">
          <button class="first">指标A</button>
          ${indicators.map((t) => html`<button class=${classMap({ platform: t === "指标平台", setup: t === "设置", roomy: roomy.has(t) })}>${t}</button>`)}
          <span class="gap"></span>
          <button class="wide">指标B</button><button class="wide">模 板</button>
          <button class="key">+</button><button class="key">−</button>
        </nav>
      </main>
      <quote-board></quote-board>
    </div>`;
  }
}
